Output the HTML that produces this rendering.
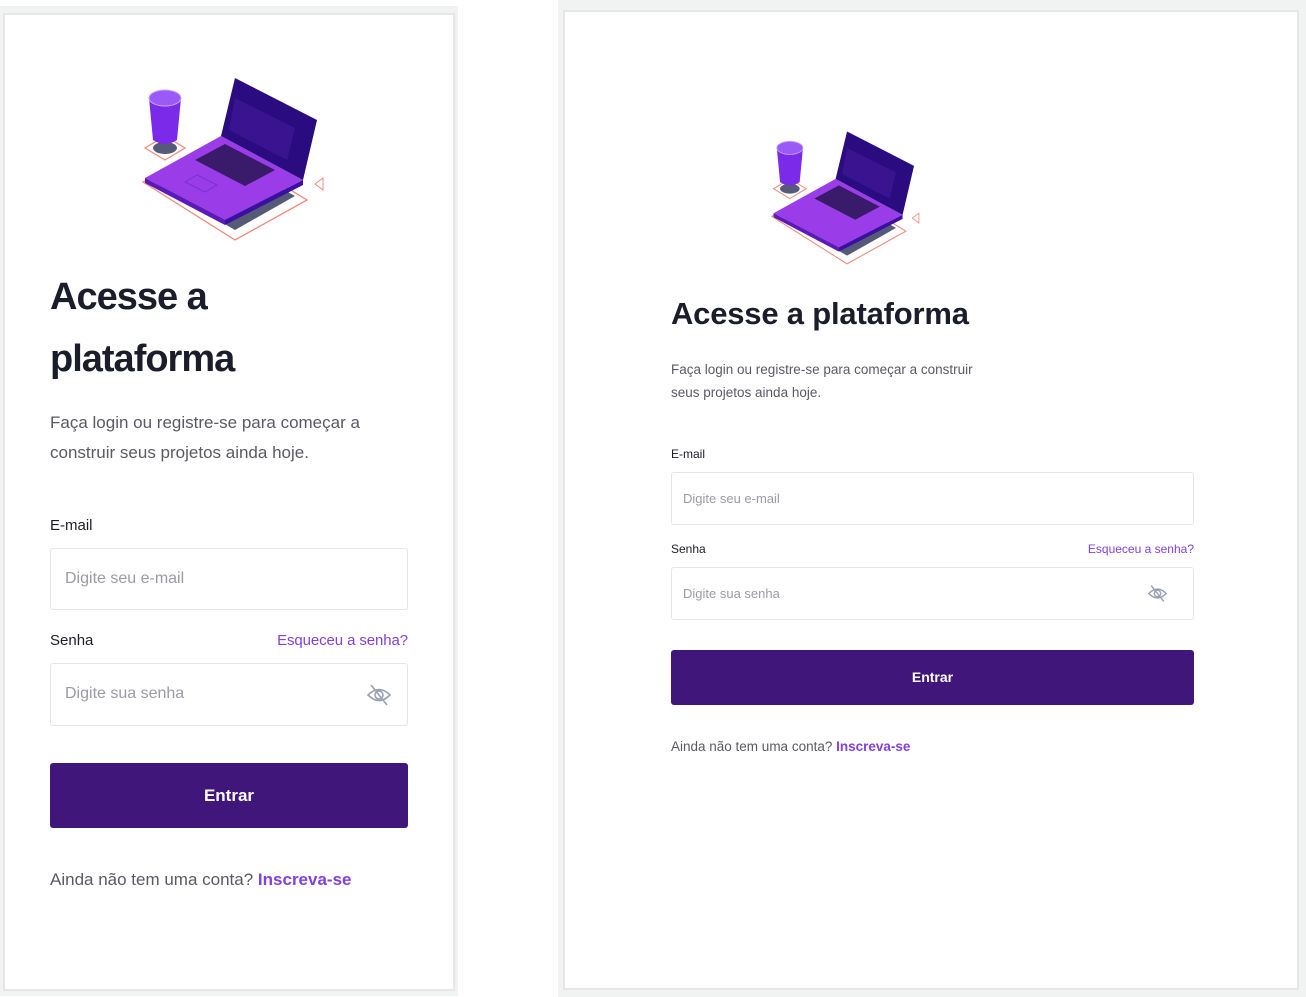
<!DOCTYPE html>
<html><head><meta charset="utf-8"><style>
*{margin:0;padding:0;box-sizing:border-box}
body{width:1306px;height:997px;background:#fff;position:relative;overflow:hidden;font-family:"Liberation Sans",sans-serif;color:#1c1d2b}
.a{position:absolute}
.frame{background:#f1f2f2}
.card{background:#fff;border:2px solid #e6e6e6}
.inp{border:1px solid #e6e6ea;border-radius:3px;background:#fff;color:#9a9aa8}
.btn{background:#41167a;border-radius:3px;color:#fff;font-weight:bold;text-align:center}
.link{color:#8240e0}
.gray{color:#5a5a66}
</style></head><body>
<!-- left -->
<div class="a frame" style="left:0;top:6px;width:458px;height:990px"></div>
<div class="a card" style="left:3px;top:13px;width:452px;height:978px"></div>
<svg class="a" style="left:135px;top:70px" width="195" height="180" viewBox="0 0 195 180">
<polygon points="8,112 100,170 172,130 80,74" fill="none" stroke="#f08a7a" stroke-width="1.3"/>
<polygon points="20,113 100,160 160,126 80,82" fill="#555a78"/>
<polygon points="10,78 30,66 50,78 30,90" fill="none" stroke="#f08a7a" stroke-width="1.2"/>
<ellipse cx="30" cy="78" rx="12" ry="6" fill="#555a78"/>
<path d="M14,28 L18,70 Q30,78 42,70 L46,28 Z" fill="#7a2ae8"/>
<ellipse cx="30" cy="28" rx="16" ry="8" fill="#9a5af8" stroke="#c8a8ff"/>
<polygon points="10,108 90,150 168,110 86,66" fill="#9a3ce8"/>
<polygon points="10,108 90,150 90,155 10,113" fill="#5a1ab8"/>
<polygon points="90,150 168,110 168,115 90,155" fill="#3a10a0"/>
<polygon points="86,66 168,110 182,50 100,8" fill="#2a0c80"/>
<polygon points="100,28 160,58 152,90 94,60" fill="#3a1490"/>
<polygon points="60,90 110,116 140,100 90,74" fill="#3a1a6a"/>
<polygon points="50,112 70,122 82,115 62,105" fill="none" stroke="#7a30d0"/>
<polygon points="180,114 188,108 188,120" fill="none" stroke="#f08a7a"/>
</svg>
<div class="a" style="left:50px;top:266px;font-size:38px;font-weight:bold;line-height:62px;letter-spacing:-1px">Acesse a<br>plataforma</div>
<div class="a gray" style="left:50px;top:408px;font-size:17px;line-height:30px">Faça login ou registre-se para começar a<br>construir seus projetos ainda hoje.</div>
<div class="a" style="left:50px;top:517px;font-size:15px">E-mail</div>
<div class="a inp" style="left:50px;top:548px;width:358px;height:62px;padding:21px 14px;font-size:16px">Digite seu e-mail</div>
<div class="a" style="left:50px;top:632px;font-size:15px">Senha</div>
<div class="a link" style="left:208px;width:200px;text-align:right;top:632px;font-size:15px;letter-spacing:-0.1px">Esqueceu a senha?</div>
<div class="a inp" style="left:50px;top:663px;width:358px;height:63px;padding:21px 14px;font-size:16px">Digite sua senha</div>
<svg class="a" style="left:366px;top:683px" width="26" height="24" viewBox="0 0 26 24" fill="none" stroke="#9aa0b4" stroke-width="1.6"><path d="M2,12 Q13,1 24,12 Q13,23 2,12Z"/><circle cx="13" cy="12" r="4"/><path d="M5,2 L21,22"/></svg>
<div class="a btn" style="left:50px;top:763px;width:358px;height:65px;line-height:65px;font-size:17px">Entrar</div>
<div class="a gray" style="left:50px;top:870px;font-size:17px">Ainda não tem uma conta? <b class="link">Inscreva-se</b></div>
<!-- right -->
<div class="a frame" style="left:558px;top:0;width:748px;height:997px"></div>
<div class="a card" style="left:563px;top:10px;width:736px;height:980px"></div>
<svg class="a" style="left:765px;top:125px" width="160" height="147" viewBox="0 0 195 180">
<polygon points="8,112 100,170 172,130 80,74" fill="none" stroke="#f08a7a" stroke-width="1.3"/>
<polygon points="20,113 100,160 160,126 80,82" fill="#555a78"/>
<polygon points="10,78 30,66 50,78 30,90" fill="none" stroke="#f08a7a" stroke-width="1.2"/>
<ellipse cx="30" cy="78" rx="12" ry="6" fill="#555a78"/>
<path d="M14,28 L18,70 Q30,78 42,70 L46,28 Z" fill="#7a2ae8"/>
<ellipse cx="30" cy="28" rx="16" ry="8" fill="#9a5af8" stroke="#c8a8ff"/>
<polygon points="10,108 90,150 168,110 86,66" fill="#9a3ce8"/>
<polygon points="10,108 90,150 90,155 10,113" fill="#5a1ab8"/>
<polygon points="90,150 168,110 168,115 90,155" fill="#3a10a0"/>
<polygon points="86,66 168,110 182,50 100,8" fill="#2a0c80"/>
<polygon points="100,28 160,58 152,90 94,60" fill="#3a1490"/>
<polygon points="60,90 110,116 140,100 90,74" fill="#3a1a6a"/>
<polygon points="180,114 188,108 188,120" fill="none" stroke="#f08a7a"/>
</svg>
<div class="a" style="left:671px;top:296px;font-size:31px;font-weight:bold;letter-spacing:-0.2px">Acesse a plataforma</div>
<div class="a gray" style="left:671px;top:358px;font-size:13.5px;line-height:23px">Faça login ou registre-se para começar a construir<br>seus projetos ainda hoje.</div>
<div class="a" style="left:671px;top:447px;font-size:12px">E-mail</div>
<div class="a inp" style="left:671px;top:472px;width:523px;height:53px;padding:18px 11px;font-size:13px">Digite seu e-mail</div>
<div class="a" style="left:671px;top:542px;font-size:12px">Senha</div>
<div class="a link" style="left:994px;width:200px;text-align:right;top:542px;font-size:12px">Esqueceu a senha?</div>
<div class="a inp" style="left:671px;top:567px;width:523px;height:53px;padding:18px 11px;font-size:13px">Digite sua senha</div>
<svg class="a" style="left:1147px;top:584px" width="21" height="19" viewBox="0 0 26 24" fill="none" stroke="#9aa0b4" stroke-width="1.8"><path d="M2,12 Q13,1 24,12 Q13,23 2,12Z"/><circle cx="13" cy="12" r="4"/><path d="M5,2 L21,22"/></svg>
<div class="a btn" style="left:671px;top:650px;width:523px;height:55px;line-height:55px;font-size:14px">Entrar</div>
<div class="a gray" style="left:671px;top:739px;font-size:13.5px">Ainda não tem uma conta? <b class="link">Inscreva-se</b></div>
</body></html>
